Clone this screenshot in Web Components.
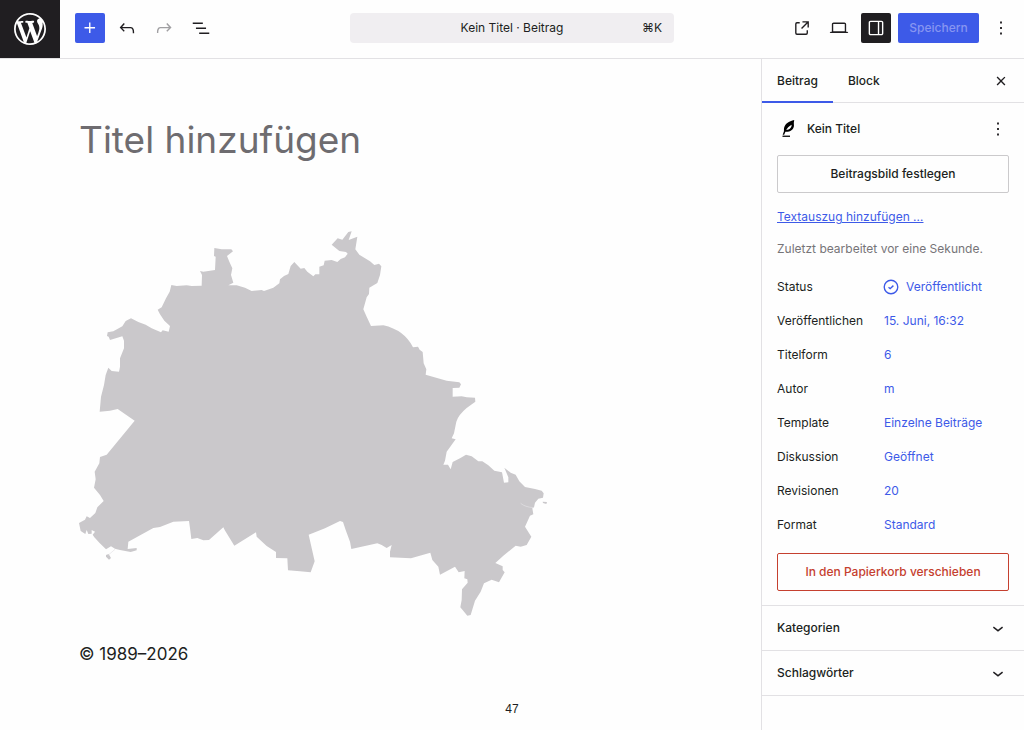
<!DOCTYPE html>
<html lang="de">
<head>
<meta charset="utf-8">
<meta name="viewport" content="width=device-width, initial-scale=1">
<title>Kein Titel · Beitrag</title>
<style>
  html, body { margin: 0; }
  body {
    --accent: #3d5ae8;
    --ink: #201e21;
    --line: #e2e1e4;
    --danger: #c5402f;
    background: #fefefe;
    color: var(--ink);
    font: 400 12px/20px Inter, "Liberation Sans", sans-serif;
  }
</style>
</head>
<body>
<post-editor>
  <editor-header slot="header" heading="Kein Titel · Beitrag" shortcut="⌘K"></editor-header>
  <post-canvas slot="canvas">
    <span slot="title">Titel hinzufügen</span>
    <region-map></region-map>
    <span slot="footer">© 1989–2026</span>
  </post-canvas>
  <settings-sidebar slot="sidebar">
    <post-summary heading="Kein Titel">
      <property-row label="Status" icon="published">Veröffentlicht</property-row>
      <property-row label="Veröffentlichen">15. Juni, 16:32</property-row>
      <property-row label="Titelform">6</property-row>
      <property-row label="Autor">m</property-row>
      <property-row label="Template">Einzelne Beiträge</property-row>
      <property-row label="Diskussion">Geöffnet</property-row>
      <property-row label="Revisionen">20</property-row>
      <property-row label="Format">Standard</property-row>
    </post-summary>
    <collapsed-panel>Kategorien</collapsed-panel>
    <collapsed-panel>Schlagwörter</collapsed-panel>
  </settings-sidebar>
  <span slot="page">47</span>
</post-editor>

<script>
const ICONS = {
  plus: '<path d="M11 12.5V17.5H12.5V12.5H17.5V11H12.5V6H11V11H6V12.5H11Z"/>',
  undo: '<path d="M18.3 11.7c-.6-.6-1.4-.9-2.3-.9H6.7l2.9-3.3-1.1-1-4.5 5L8.5 16l1-1-2.7-2.7H16c.5 0 .9.2 1.3.5 1 1 1 3.4 1 4.5v.3h1.5v-.2c0-1.5 0-4.3-1.5-5.7z"/>',
  redo: '<path d="M15.6 6.5l-1.1 1 2.9 3.3H8c-.9 0-1.7.3-2.3.9-1.4 1.5-1.4 4.2-1.4 5.6v.2h1.5v-.3c0-1.1 0-3.5 1-4.5.3-.3.7-.5 1.3-.5h9.2L14.5 15l1.1 1.1 4.6-4.6-4.6-5z"/>',
  list: '<path d="M3 6h11v1.5H3V6Zm3.5 5.5h11V13h-11v-1.5ZM21 17H10v1.5h11V17Z"/>',
  external: '<path d="M19.5 4.5h-7V6h4.44l-5.97 5.97 1.06 1.06L18 7.06v4.44h1.5v-7Zm-13 1a2 2 0 0 0-2 2v10a2 2 0 0 0 2 2h10a2 2 0 0 0 2-2v-3H17v3a.5.5 0 0 1-.5.5h-10a.5.5 0 0 1-.5-.5v-10a.5.5 0 0 1 .5-.5h3V5.5h-3Z"/>',
  desktop: '<path d="M20.5 16h-.7V8c0-1.1-.9-2-2-2H6.2c-1.1 0-2 .9-2 2v8h-.7c-.8 0-1.5.7-1.5 1.5h20c0-.8-.7-1.5-1.5-1.5zM5.7 8c0-.3.2-.5.5-.5h11.6c.3 0 .5.2.5.5v7.6H5.7V8z"/>',
  drawer: '<path d="M18 4H6c-1.1 0-2 .9-2 2v12c0 1.1.9 2 2 2h12c1.1 0 2-.9 2-2V6c0-1.1-.9-2-2-2zm-4 14.5H6c-.3 0-.5-.2-.5-.5V6c0-.3.2-.5.5-.5h8v13zm4.5-.5c0 .3-.2.5-.5.5h-2.5v-13H18c.3 0 .5.2.5.5v12z"/>',
  more: '<path d="M13 19h-2v-2h2v2zm0-6h-2v-2h2v2zm0-6h-2V5h2v2z"/>',
  close: '<path d="M12 13.06l3.712 3.713 1.061-1.06L13.061 12l3.712-3.712-1.06-1.06L12 10.938 8.288 7.227l-1.061 1.06L10.939 12l-3.712 3.712 1.06 1.061L12 13.061z"/>',
  chevron: '<path d="M17.5 11.6L12 16l-5.5-4.4.9-1.2L12 14l4.5-3.6 1 1.2z"/>',
  published: '<g fill="none" stroke="currentColor" stroke-width="1.5"><circle cx="12" cy="12" r="7.4"/><path d="M9.3 12.2l1.800 1.600 3.500-3.300"/></g>',
  quill: '<path fill-rule="evenodd" d="M18.800 2.200C13 3.400 8.200 6.500 7.600 11.500 7.500 12.800 7.700 13.600 7.500 14.600L6.200 18.200h1.600l1.400-3.200c5 .3 8.700-2.200 9.300-6.400C18.200 6.400 18.300 4.200 18.800 2.200zM10.100 13.100C10.900 11.200 13 8.900 15.900 7.300c.2 2.900-2 5.500-5.800 5.800z"/><path d="M6 19.200h8.200v1.400H6z"/>'
};

const CONTROL_STYLES = `
  * { box-sizing: border-box; }
  button, a { font: inherit; color: inherit; cursor: pointer; }
  button { margin: 0; padding: 0; border: 0; background: none; border-radius: 2px; }
  .icon { display: grid; place-items: center; flex: none; width: 30px; height: 30px; }
`;

function define(name, render) {
  customElements.define(name, class extends HTMLElement {
    connectedCallback() {
      if (this.shadowRoot) return;
      this.attachShadow({ mode: 'open' }).innerHTML = render(this);
    }
  });
}

define('wp-icon', el => `
  <style>
    :host { display: block; width: 22px; height: 22px; flex: none; }
    svg { display: block; width: 100%; height: 100%; fill: currentColor; }
  </style>
  <svg viewBox="0 0 24 24" aria-hidden="true">${ICONS[el.getAttribute('name')]}</svg>`);

define('post-editor', () => `
  <style>
    :host {
      display: grid; position: relative; box-sizing: border-box; min-height: 100vh;
      grid-template: auto 1fr / minmax(0, 1fr) 263px;
    }
    slot[name=header]::slotted(*) { grid-column: 1 / -1; }
    footer {
      position: absolute; left: 0; right: 0; bottom: 11px; text-align: center;
      font: 12px/20px "Liberation Sans", Arial, sans-serif; pointer-events: none;
    }
  </style>
  <slot name="header"></slot>
  <slot name="canvas"></slot>
  <slot name="sidebar"></slot>
  <footer><slot name="page"></slot></footer>`);

define('editor-header', el => `
  <style>
    ${CONTROL_STYLES}
    :host {
      display: grid; grid-template-columns: auto 1fr minmax(0, 324px) 1fr; align-items: center;
      border-bottom: 1px solid var(--line);
    }
    .tools, .actions, .command { margin-bottom: 2px; }
    .tools, .actions { display: flex; align-items: center; gap: 7px; }
    .tools { padding-left: 15px; }
    .tools, .actions { min-width: 0; }
    .actions { justify-content: flex-end; padding-right: 8px; }
    :host { grid-template-columns: 60px calc(50% - 222px) minmax(0, 324px) 1fr; }
    .logo {
      display: grid; place-items: center; width: 60px; height: 58px;
      background: var(--ink); color: #fff;
    }
    .logo svg { width: 32px; height: 32px; fill: currentColor; }
    .primary { background: var(--accent); color: #fff; }
    .pressed { background: var(--ink); color: #fff; }
    .save { width: 81px; height: 30px; color: #8795f1; font-weight: 500; }
    :disabled { cursor: default; }
    .redo { color: #a09fa2; }
    .command {
      display: grid; grid-template-columns: 1fr auto 1fr; align-items: center;
      height: 30px; padding: 0 12px; border-radius: 4px; background: #f0eef1;
    }
    .command span { grid-column: 2; }
    .command kbd { font: inherit; justify-self: end; }
  </style>
  <a class="logo" href="#" aria-label="WordPress">
    <svg viewBox="0 0 20 20" aria-hidden="true"><path d="M20 10c0-5.510-4.490-10-10-10C4.480 0 0 4.490 0 10c0 5.520 4.480 10 10 10 5.510 0 10-4.480 10-10zM7.780 15.370L4.370 6.220c.55-.02 1.170-.08 1.170-.08.5-.06.44-1.130-.06-1.110 0 0-1.450.11-2.370.11-.18 0-.37 0-.58-.01C4.120 2.690 6.870 1.110 10 1.110c2.330 0 4.450.87 6.050 2.340-.68-.11-1.650.39-1.650 1.580 0 .74.45 1.360.9 2.100.35.61.55 1.360.55 2.460 0 1.490-1.400 5-1.400 5l-3.030-8.370c.54-.02.82-.17.82-.17.5-.05.44-1.250-.06-1.220 0 0-1.440.12-2.380.12-.87 0-2.330-.12-2.330-.12-.5-.03-.56 1.200-.06 1.220l.92.08 1.260 3.410zM17.410 10c.24-.64.74-1.870.43-4.250.7 1.290 1.050 2.710 1.050 4.250 0 3.290-1.730 6.240-4.400 7.780.97-2.590 1.940-5.200 2.920-7.780zM6.100 18.090C3.120 16.650 1.110 13.530 1.110 10c0-1.300.23-2.480.72-3.590C3.250 10.300 4.670 14.200 6.100 18.090zm4.030-6.630l2.580 6.980c-.86.29-1.760.45-2.710.45-.79 0-1.570-.11-2.290-.33.81-2.380 1.620-4.740 2.420-7.100z"/></svg>
  </a>
  <div class="tools">
    <button class="icon primary" aria-label="Block einfügen"><wp-icon name="plus"></wp-icon></button>
    <button class="icon" aria-label="Rückgängig"><wp-icon name="undo"></wp-icon></button>
    <button class="icon redo" aria-label="Wiederholen" disabled><wp-icon name="redo"></wp-icon></button>
    <button class="icon" aria-label="Dokumentübersicht"><wp-icon name="list"></wp-icon></button>
  </div>
  <button class="command"><span>${el.getAttribute('heading')}</span><kbd>${el.getAttribute('shortcut')}</kbd></button>
  <div class="actions">
    <button class="icon" aria-label="Beitrag anzeigen"><wp-icon name="external"></wp-icon></button>
    <button class="icon" aria-label="Vorschau"><wp-icon name="desktop"></wp-icon></button>
    <button class="icon pressed" aria-label="Einstellungen" aria-pressed="true"><wp-icon name="drawer"></wp-icon></button>
    <button class="primary save" disabled>Speichern</button>
    <button class="icon" aria-label="Optionen"><wp-icon name="more"></wp-icon></button>
  </div>`);

define('post-canvas', () => `
  <style>
    :host { display: block; padding: 53px 79px; }
    h1 { margin: 0; font-size: 37px; line-height: 56px; font-weight: 400; color: #6e6c70; }
    figure { margin: 63px 0 26px; }
    p { margin: 0; font-size: 17px; line-height: 24px; }
  </style>
  <h1><slot name="title"></slot></h1>
  <figure><slot></slot></figure>
  <p><slot name="footer"></slot></p>`);

define('region-map', () => `
  <style>
    :host { display: block; max-width: 468px; }
    svg { display: block; width: 100%; fill: #cac8cb; }
  </style>
  <svg viewBox="237 693 1404 1155" role="img" aria-label="Berlin">
    <path d="M404 1262 353 1227 330 1232 299 1235 303 1190 312 1155 317 1125 325 1103 335 1113 357 1115 360 1100 360 1075 372 1045 372 1022 367 1009 330 1020 326 1010 321 1008 323 997 340 994 367 979 377 963 393 955 415 966 437 974 455 985 483 997 488 991 506 995 510 978 493 962 480 943 473 929 485 922 498 895 509 875 514 855 530 858 560 856 575 858 605 857 606 825 600 813 610 815 645 810 647 770 642 768 643 744 665 748 694 748 699 754 681 768 688 785 697 805 693 825 700 848 685 856 710 856 735 863 755 873 785 870 792 873 820 863 838 850 840 838 852 828 865 822 872 798 883 786 902 806 913 804 922 815 940 829 946 823 958 823 958 800 971 796 974 782 995 780 1012 786 1022 777 1035 772 1043 761 1038 756 1018 753 995 734 1013 715 1027 719 1045 696 1055 694 1046 720 1072 710 1066 748 1078 764 1110 784 1123 795 1137 791 1144 799 1140 825 1132 849 1108 863 1107 882 1100 892 1090 928 1100 950 1113 978 1150 976Q1213 990 1239 1042L1254 1040 1259 1049 1268 1056 1271 1090 1279 1108 1277 1124 1340 1142 1378 1147 1383 1153 1378 1163 1358 1164 1358 1190 1385 1189 1400 1192 1425 1193 1426 1205 1400 1224Q1375 1245 1369 1265L1362 1300 1355 1315 1367 1318 1340 1355 1335 1382 1330 1394 1344 1394 1352 1408 1358 1386 1380 1375 1398 1364 1415 1369 1435 1384 1447 1384 1465 1396 1483 1412 1506 1417 1512 1448 1525 1447 1525 1432 1513 1403 1532 1418 1547 1424 1558 1444 1575 1461 1605 1467 1625 1472 1631 1480 1629 1493 1615 1496 1605 1508 1602 1522 1597 1525 1600 1543 1590 1547 1575 1580 1594 1610 1580 1635 1562 1640 1547 1637 1510 1667 1486 1689 1508 1699 1508 1710 1514 1717 1497 1747 1475 1739 1452 1750 1442 1775 1425 1802 1412 1845 1402 1847 1381 1822 1385 1800 1386 1768 1403 1748 1402 1738 1393 1735 1394 1713 1376 1717 1365 1700 1320 1724 1315 1700 1297 1680 1291 1658 1233 1675 1170 1672 1170 1655 1175 1635 1160 1644 1145 1635 1132 1630 1054 1647 1050 1625 1037 1590 1029 1566 1020 1563 975 1585 926 1604 944 1684 932 1717 900 1714 864 1711 862 1675 828 1674 828 1656 800 1638 770 1610 768 1597 703 1637 674 1590 670 1582 627 1620 610 1621 592 1614 574 1617 570 1585 567 1563 520 1565 480 1581 460 1584 385 1625 383 1647 410 1644 410 1651 392 1656 360 1650 345 1646 333 1639 318 1648 298 1628 283 1612 278 1604 285 1595 275 1590 275 1601 265 1602 260 1590 256 1602 242 1593 237 1569 255 1559 260 1549 270 1554 286 1539 292 1522 311 1503 300 1485 282 1463 287 1438 284 1415 298 1390 300 1371 320 1364Z"/>
    <path d="M318 1665l8-3 7 12-6 5-9-9zM1628 1505l13 1-2 6-10-3z"/>
    <path d="M1562 1510Q1575 1521 1600 1523M345 1648L325 1665" fill="none" stroke="#e4e3e5" stroke-width="2"/>
  </svg>`);

define('settings-sidebar', () => `
  <style>
    ${CONTROL_STYLES}
    :host { display: block; border-left: 1px solid var(--line); }
    nav {
      display: flex; align-items: center; height: 44px; padding-right: 8px;
      border-bottom: 1px solid var(--line);
    }
    .tab { height: 44px; padding: 0 15px; font-weight: 500; border-radius: 0; }
    .tab[aria-selected=true] { box-shadow: inset 0 -2px var(--accent); }
    .close { margin-left: auto; }
  </style>
  <nav role="tablist">
    <button class="tab" role="tab" aria-selected="true">Beitrag</button>
    <button class="tab" role="tab" aria-selected="false">Block</button>
    <button class="icon close" aria-label="Einstellungen schließen"><wp-icon name="close"></wp-icon></button>
  </nav>
  <slot></slot>`);

define('post-summary', el => `
  <style>
    ${CONTROL_STYLES}
    :host { display: block; padding: 11px 15px 14px; border-bottom: 1px solid var(--line); }
    header { display: flex; align-items: center; gap: 8px; margin-right: -4px; }
    header wp-icon { color: #000; }
    header button wp-icon { color: inherit; }
    h2 { flex: 1; margin: 0; font: inherit; font-weight: 500; }
    .wide {
      display: block; width: 100%; height: 38px;
      border: 1px solid #cbcacc; font-weight: 500;
    }
    .image { margin: 11px 0 14px; }
    .trash { margin-top: 11px; border-color: var(--danger); color: var(--danger); }
    a { color: var(--accent); }
    p { margin: 12px 0 11px; color: #767478; }
  </style>
  <header>
    <wp-icon name="quill"></wp-icon>
    <h2>${el.getAttribute('heading')}</h2>
    <button class="icon" aria-label="Aktionen"><wp-icon name="more"></wp-icon></button>
  </header>
  <button class="wide image">Beitragsbild festlegen</button>
  <a href="#">Textauszug hinzufügen …</a>
  <p>Zuletzt bearbeitet vor eine Sekunde.</p>
  <slot></slot>
  <button class="wide trash">In den Papierkorb verschieben</button>`);

define('property-row', el => `
  <style>
    ${CONTROL_STYLES}
    :host { display: grid; grid-template-columns: 107px 1fr; align-items: center; height: 34px; }
    button {
      display: flex; align-items: center; gap: 4px; justify-self: start;
      color: var(--accent); text-align: left;
    }
    wp-icon { margin-left: -4px; }
  </style>
  <span id="label">${el.getAttribute('label')}</span>
  <button id="value" aria-labelledby="label value">${el.hasAttribute('icon') ? `<wp-icon name="${el.getAttribute('icon')}"></wp-icon>` : ''}<slot></slot></button>`);

define('collapsed-panel', () => `
  <style>
    ${CONTROL_STYLES}
    :host { display: block; border-bottom: 1px solid var(--line); }
    h2 { margin: 0; font: inherit; font-weight: 500; }
    button {
      display: flex; align-items: center; justify-content: space-between;
      width: 100%; height: 44px; padding: 0 15px;
    }
  </style>
  <h2><button aria-expanded="false"><slot></slot><wp-icon name="chevron"></wp-icon></button></h2>`);
</script>
</body>
</html>
